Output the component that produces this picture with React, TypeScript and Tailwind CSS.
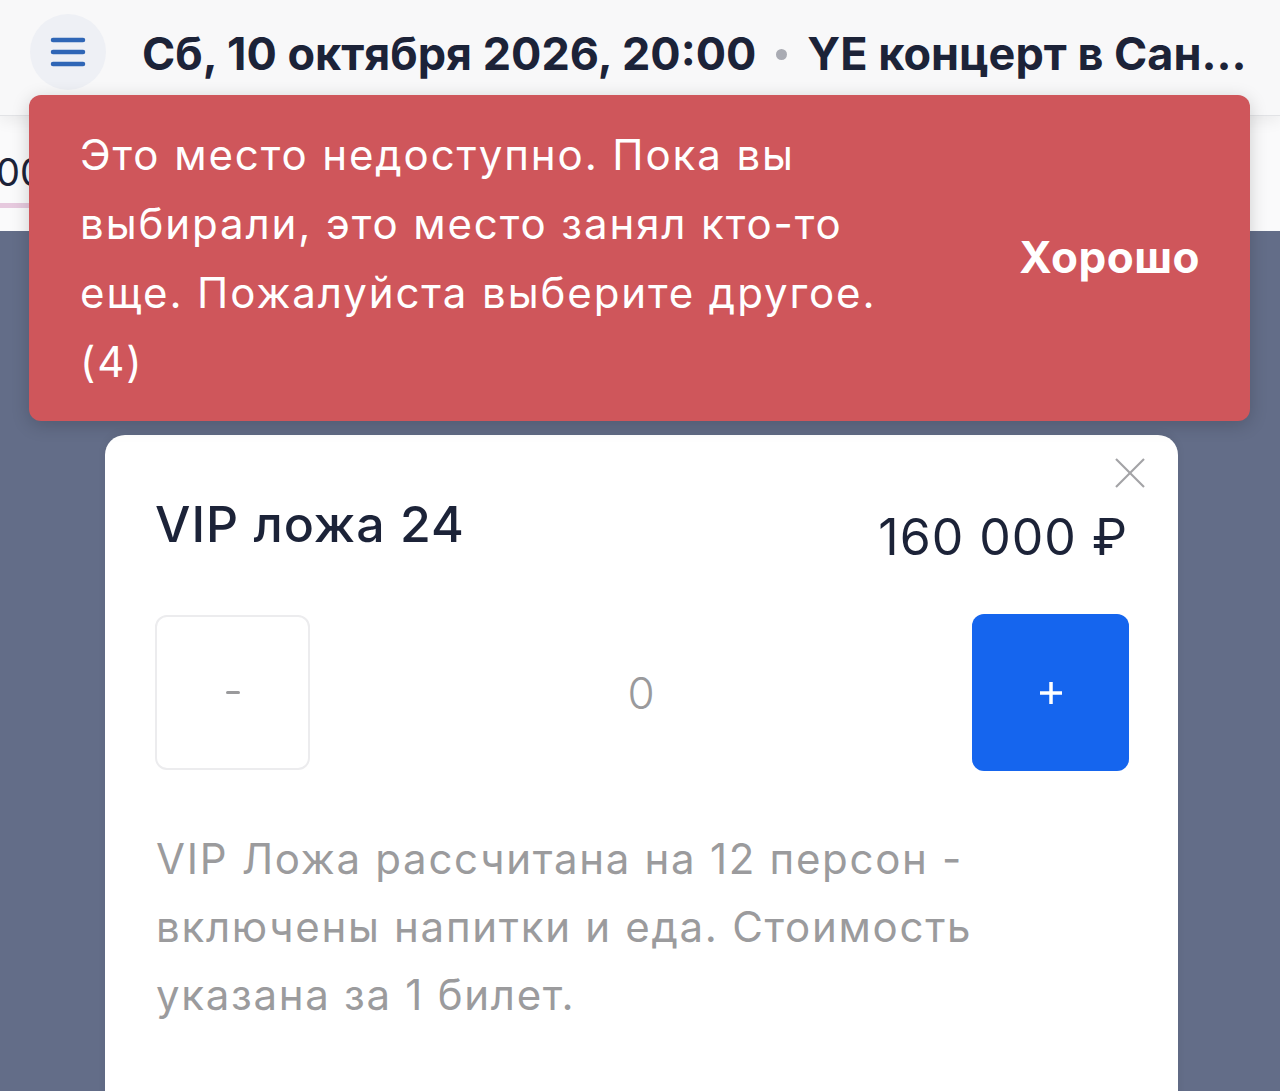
import React from "react";

export default function App() {
  const font = { fontFamily: "Inter, 'Noto Sans', sans-serif" };
  return (
    <div
      className="relative w-[1280px] h-[1091px] overflow-hidden bg-[#636d88]"
      style={font}
    >
      {/* Header */}
      <div className="relative z-10 h-[116px] bg-[#f8f8f9] shadow-[0_6px_14px_rgba(0,0,0,0.06)] border-b border-[#e2e3e6] flex items-start">
        <div className="ml-[30px] mt-[14px] w-[76px] h-[76px] rounded-full bg-[#eef0f5] flex items-center justify-center">
          <svg width="36" height="30" viewBox="0 0 36 30">
            <line x1="3" y1="3" x2="33" y2="3" stroke="#2f66b6" strokeWidth="4.5" strokeLinecap="round" />
            <line x1="3" y1="15" x2="33" y2="15" stroke="#2f66b6" strokeWidth="4.5" strokeLinecap="round" />
            <line x1="3" y1="27" x2="33" y2="27" stroke="#2f66b6" strokeWidth="4.5" strokeLinecap="round" />
          </svg>
        </div>
        <div className="ml-[36px] mt-[27px] flex items-center whitespace-nowrap text-[45px] leading-[54px] font-bold text-[#1c2338] tracking-[0px]">
          <span>Сб, 10 октября 2026, 20:00</span>
          <span className="mx-[20px] w-[11px] h-[11px] rounded-full bg-[#a9abb3]" />
          <span>YE концерт в Сан...</span>
        </div>
      </div>

      {/* Second strip */}
      <div className="h-[115px] bg-[#fafafb] relative">
        <div className="pt-[33px] text-[38px] leading-[46px] text-[#1c2338] -ml-[4px]">00</div>
        <div className="mt-[8px] w-[40px] h-[5px] bg-[#e6c9de]" />
      </div>

      {/* Modal sheet */}
      <div className="ml-[105px] mt-[204px] w-[1073px] h-[700px] bg-white rounded-t-[20px] shadow-[0_-2px_8px_rgba(0,0,0,0.06)] relative">
        <button className="absolute right-[32px] top-[22px] w-[32px] h-[32px] flex items-center justify-center">
          <svg width="32" height="32" viewBox="0 0 32 32">
            <line x1="2" y1="2" x2="30" y2="30" stroke="#a3a3a6" strokeWidth="2.2" />
            <line x1="30" y1="2" x2="2" y2="30" stroke="#a3a3a6" strokeWidth="2.2" />
          </svg>
        </button>
        <div className="pl-[50px] pr-[50px] pt-[60px] flex justify-between items-start">
          <div className="text-[50px] leading-[58px] font-medium text-[#1c2338] tracking-[1px]">VIP ложа 24</div>
          <div className="mt-[13px] text-[50px] leading-[58px] text-[#1c2338] tracking-[1px]">160 000 ₽</div>
        </div>
        <div className="pl-[50px] pr-[49px] mt-[48px] flex items-center justify-between">
          <div className="w-[155px] h-[155px] rounded-[12px] border-2 border-[#ececee] flex items-center justify-center">
            <div className="w-[14px] h-[3px] bg-[#9a9a9c] rounded-sm" />
          </div>
          <div className="text-[44px] font-light text-[#9a9a9c]">0</div>
          <div className="w-[157px] h-[157px] rounded-[12px] bg-[#1565ee] flex items-center justify-center">
            <svg width="26" height="26" viewBox="0 0 26 26">
              <line x1="13" y1="2" x2="13" y2="24" stroke="white" strokeWidth="3.5" />
              <line x1="2" y1="13" x2="24" y2="13" stroke="white" strokeWidth="3.5" />
            </svg>
          </div>
        </div>
        <div className="pl-[51px] mt-[54px] text-[42px] leading-[68px] text-[#9b9b9d] tracking-[1.7px] w-[1000px]">
          VIP Ложа рассчитана на 12 персон -<br />
          включены напитки и еда. Стоимость<br />
          указана за 1 билет.
        </div>
      </div>

      {/* Toast */}
      <div className="absolute z-20 left-[29px] top-[95px] w-[1221px] h-[326px] rounded-[12px] bg-[#cf565b] shadow-[0_4px_18px_rgba(0,0,0,0.18)] flex items-center justify-between">
        <div className="pl-[51px] text-[42px] leading-[69px] text-white tracking-[1.9px] whitespace-nowrap">
          Это место недоступно. Пока вы<br />
          выбирали, это место занял кто-то<br />
          еще. Пожалуйста выберите другое.<br />
          (4)
        </div>
        <div className="pr-[50px] text-[44px] font-bold text-white tracking-[0.5px] -mt-[2px]">Хорошо</div>
      </div>
    </div>
  );
}
